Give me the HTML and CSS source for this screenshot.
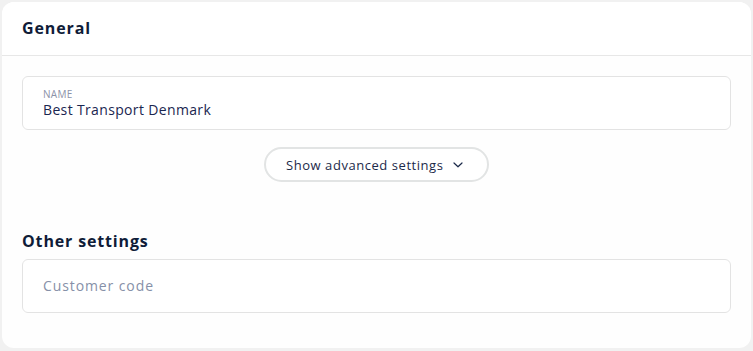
FILE: index.html
```html
<!DOCTYPE html>
<html lang="en">
<head>
  <meta charset="UTF-8">
  <title>Carrier settings</title>
  <link rel="stylesheet" href="styles.css">
</head>
<body>
  <div class="card">
    <div class="card-header">
      <h2>General</h2>
    </div>

    <div class="card-body">
      <div class="field">
        <label class="field-label">Name</label>
        <div class="field-value">Best Transport Denmark</div>
      </div>

      <div class="advanced-row">
        <button class="pill-btn">
          Show advanced settings
          <svg width="10" height="6" viewBox="0 0 10 6" fill="none">
            <path d="M1 1l4 3.8 4-3.8" stroke="#1c2a4a" stroke-width="1.2" stroke-linecap="round" stroke-linejoin="round"/>
          </svg>
        </button>
      </div>

      <h3 class="section-title">Other settings</h3>
      <div class="field">
        <div class="placeholder">Customer code</div>
      </div>
    </div>
  </div>
</body>
</html>
```

FILE: styles.css
```css
* {
  box-sizing: border-box;
}

body {
  margin: 0;
  padding: 2px;
  background-color: #f1f1f1;
  font-family: "Open Sans", sans-serif;
  color: #0f1c38;
}

.card {
  width: 749px;
  height: 346px;
  background: #fefefe;
  border-radius: 12px;
  overflow: hidden;
}

.card-header {
  background: #fff;
  height: 54px;
  padding: 0 20px;
  display: flex;
  align-items: center;
  border-bottom: 1px solid #e7e7e7;
}

.card-header h2 {
  margin: 0 0 2px;
  font-size: 16px;
  font-weight: 700;
  letter-spacing: 0.9px;
}

.card-body {
  padding: 20px 20px 0;
}

.field {
  background: #fff;
  border: 1px solid #e3e3e3;
  border-radius: 6px;
  height: 54px;
  padding: 0 20px;
  display: flex;
  flex-direction: column;
  justify-content: center;
}

.field-label {
  font-size: 10px;
  text-transform: uppercase;
  color: #8c93a8;
  line-height: 12px;
  margin-top: 2px;
  letter-spacing: 0.3px;
}

.field-value {
  font-size: 14px;
  color: #1a2650;
  line-height: 20px;
  letter-spacing: 0.35px;
}

.advanced-row {
  display: flex;
  justify-content: center;
  margin-top: 17px;
}

.pill-btn {
  display: flex;
  align-items: center;
  gap: 10px;
  height: 35px;
  width: 225px;
  padding: 0 0 0 20px;
  justify-content: flex-start;
  background: #fff;
  border: 2px solid #e2e4e4;
  border-radius: 18px;
  font-family: "Open Sans", sans-serif;
  font-size: 13px;
  font-weight: 500;
  letter-spacing: 0.55px;
  color: #1c2a4a;
  cursor: pointer;
}

.section-title {
  margin: 48px 0 7px;
  font-size: 16px;
  font-weight: 700;
  line-height: 22px;
  letter-spacing: 0.85px;
}

.placeholder {
  font-size: 14px;
  color: #8690a8;
  letter-spacing: 0.9px;
  margin-top: -2px;
}
```
